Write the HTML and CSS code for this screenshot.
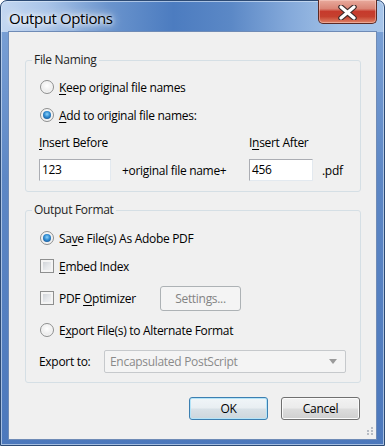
FILE: index.html
```html
<!DOCTYPE html>
<html lang="en">
<head>
    <meta charset="UTF-8">
    <title>Output Options</title>
    <link rel="stylesheet" href="styles.css">
</head>
<body>

    <div class="window">

        <!-- Title bar -->
        <div class="titlebar">
            <span class="title">Output Options</span>
            <button class="close-btn" aria-label="Close">
                <svg width="19" height="15" viewBox="0 0 19 15">
                    <path d="M3 2 L16 13 M16 2 L3 13" stroke="#3a2a2a" stroke-width="5.5" stroke-linecap="round"/>
                    <path d="M3 2 L16 13 M16 2 L3 13" stroke="#ffffff" stroke-width="3.2" stroke-linecap="round"/>
                </svg>
            </button>
        </div>

        <!-- Client area -->
        <div class="client">

            <fieldset class="group group-naming">
                <legend>File Naming</legend>
                <div class="row">
                    <span class="radio"></span>
                    <span><u>K</u>eep original file names</span>
                </div>
                <div class="row">
                    <span class="radio checked"></span>
                    <span><u>A</u>dd to original file names:</span>
                </div>
                <div class="insert-grid">
                    <span><u>I</u>nsert Before</span>
                    <span></span>
                    <span>I<u>n</u>sert After</span>
                    <span></span>
                    <div class="textbox tb-before">123</div>
                    <span>+original file name+</span>
                    <div class="textbox tb-after">456</div>
                    <span>.pdf</span>
                </div>
            </fieldset>

            <fieldset class="group group-format">
                <legend>Output Format</legend>
                <div class="row">
                    <span class="radio checked"></span>
                    <span>Sa<u>v</u>e File(s) As Adobe PDF</span>
                </div>
                <div class="row">
                    <span class="checkbox"></span>
                    <span><u>E</u>mbed Index</span>
                </div>
                <div class="row row-optimizer">
                    <div class="opt-label">
                        <span class="checkbox"></span>
                        <span>PDF <u>O</u>ptimizer</span>
                    </div>
                    <button class="button button-disabled" disabled>Settings...</button>
                </div>
                <div class="row">
                    <span class="radio"></span>
                    <span>E<u>x</u>port File(s) to Alternate Format</span>
                </div>
                <div class="row row-export">
                    <span class="export-label">Export to:</span>
                    <div class="dropdown">
                        <span>Encapsulated PostScript</span>
                        <span class="arrow"></span>
                    </div>
                </div>
            </fieldset>

            <div class="footer">
                <button class="button button-default">OK</button>
                <button class="button">Cancel</button>
            </div>

            <!-- Resize grip -->
            <svg class="grip" width="8" height="9" viewBox="0 0 8 9">
                <rect x="5" y="0" width="2" height="2" fill="#b7bcc4"/>
                <rect x="1" y="3" width="2" height="2" fill="#b7bcc4"/>
                <rect x="5" y="3" width="2" height="2" fill="#b7bcc4"/>
                <rect x="1" y="6" width="2" height="2" fill="#b7bcc4"/>
                <rect x="5" y="6" width="2" height="2" fill="#b7bcc4"/>
            </svg>
        </div>

    </div>

</body>
</html>
```

FILE: styles.css
```css
/* General Styling */
* {
    margin: 0;
    padding: 0;
    box-sizing: border-box;
}

body {
    background-color: #ffffff;
    font-family: "Segoe UI", "Open Sans", sans-serif;
    font-size: 12px;
    letter-spacing: -0.3px;
    color: #000000;
}

u {
    text-decoration-thickness: 1px;
    text-underline-offset: 2px;
}

/* Window frame */
.window {
    width: 385px;
    height: 446px;
    border: 1px solid #2c4a74;
    border-radius: 7px 7px 0 0;
    padding: 0 7px 5px 7px;
    display: flex;
    flex-direction: column;
    background:
        linear-gradient(90deg, #c3d7f1 0%, #a9c4e8 12%, #6a94cd 28%, #4c7cc0 45%, #5b88c6 60%, #84a9da 75%, #a1c1e7 88%, #a7c5ea 100%) top / 100% 31px no-repeat,
        linear-gradient(180deg, #7ea4d8 0%, #5d87c5 40%, #4c78bc 100%);
    box-shadow: inset 0 0 0 1px rgba(225, 236, 250, 0.6);
}

/* Title bar */
.titlebar {
    height: 30px;
    display: flex;
    align-items: flex-start;
}

.title {
    margin-top: 7px;
    padding-left: 1px;
    font-size: 15px;
    letter-spacing: -0.4px;
    line-height: 20px;
    color: #000000;
    text-shadow: 0 0 8px #ffffff, 0 0 12px rgba(255, 255, 255, 0.9), 0 0 4px #ffffff;
}

.close-btn {
    margin-left: auto;
    margin-top: -1px;
    width: 59px;
    height: 24px;
    border: 1px solid #5c2a25;
    border-top: none;
    border-radius: 0 0 5px 5px;
    background: linear-gradient(180deg, #e8aa9d 0%, #da8576 38%, #c63a2c 50%, #c5402e 72%, #df8468 100%);
    box-shadow: inset 0 0 0 1px rgba(255, 220, 210, 0.45);
    display: flex;
    align-items: center;
    justify-content: center;
    padding-top: 1px;
}

/* Client area */
.client {
    flex: 1;
    position: relative;
    background-color: #f0f0f0;
    border: 1px solid #6f8bb6;
    display: flex;
    flex-direction: column;
}

/* Group boxes */
.group {
    margin: 0 15px 0 16px;
    border: 1px solid #d5dfe5;
    border-radius: 3px;
    padding: 5px 14px 10px 13px;
    min-width: 0;
}

.group legend {
    margin-left: -7px;
    padding: 0 2px;
    line-height: 16px;
    color: #1e1e1e;
}

.group-naming {
    margin-top: 20px;
}

.group-format {
    margin-top: 10px;
    padding-top: 6px;
    padding-bottom: 9px;
}

.row {
    height: 28px;
    display: flex;
    align-items: center;
    gap: 5px;
}

.row-optimizer {
    height: 36px;
}

.row-export {
    height: 23px;
    margin-top: 6px;
    gap: 0;
}

/* Radio buttons and check boxes */
.radio {
    width: 14px;
    height: 14px;
    margin-left: 1px;
    border-radius: 50%;
    border: 1px solid #8e8f8f;
    background: radial-gradient(circle at 50% 40%, #ffffff 0%, #ececec 60%, #d6d6d6 100%);
    box-shadow: inset 0 0 0 1px #f6f6f6;
    position: relative;
    flex-shrink: 0;
}

.radio.checked::after {
    content: "";
    position: absolute;
    left: 2px;
    top: 2px;
    width: 8px;
    height: 8px;
    border-radius: 50%;
    background: radial-gradient(circle at 50% 40%, #8fd3fa 0%, #2f8ad0 45%, #0d3f7d 100%);
}

.checkbox {
    width: 14px;
    height: 14px;
    margin-left: 1px;
    border: 1px solid #8e8f8f;
    background: linear-gradient(135deg, #c7cbd1 0%, #e6e8eb 55%, #f7f7f7 100%);
    box-shadow: inset 0 0 0 2px #f4f4f4;
    flex-shrink: 0;
}

/* Insert before / after */
.insert-grid {
    display: grid;
    grid-template-columns: 83px 127px 73px auto;
    grid-template-rows: 26px 22px;
    row-gap: 4px;
    align-items: center;
}

.textbox {
    height: 22px;
    background: #ffffff;
    border: 1px solid;
    border-color: #abadb3 #e3e9ef #e3e9ef #abadb3;
    padding-left: 2px;
    line-height: 20px;
}

.tb-before {
    width: 72px;
}

.tb-after {
    width: 64px;
}

/* Output format */
.opt-label {
    width: 116px;
    display: flex;
    align-items: center;
    gap: 5px;
}

.export-label {
    width: 65px;
}

.dropdown {
    flex: 1;
    height: 23px;
    border: 1px solid #c6c9cc;
    border-radius: 2px;
    background: #f4f4f4;
    color: #8a8a8a;
    display: flex;
    align-items: center;
    padding: 0 5px 0 5px;
}

.dropdown .arrow {
    margin-left: auto;
    margin-right: 3px;
    width: 0;
    height: 0;
    border-left: 4px solid transparent;
    border-right: 4px solid transparent;
    border-top: 5px solid #9a9a9a;
}

/* Buttons */
.button {
    font-family: inherit;
    font-size: 12px;
    letter-spacing: inherit;
    width: 79px;
    height: 23px;
    color: #000000;
    border: 1px solid #707070;
    border-radius: 3px;
    background: linear-gradient(180deg, #f2f2f2 0%, #ebebeb 48%, #dddddd 52%, #cfcfcf 100%);
    box-shadow: inset 0 0 0 1px #fbfbfb;
}

.button-disabled {
    width: 81px;
    height: 25px;
    border-color: #adb2b5;
    background: #f4f4f4;
    color: #838383;
    box-shadow: none;
}

.button-default {
    border-color: #3c7fb1;
    box-shadow: inset 0 0 0 1px #b4e4f8;
    background: linear-gradient(180deg, #f0f5f8 0%, #e8eef2 48%, #d8e1e7 52%, #cdd6dc 100%);
}

.footer {
    margin-top: 14px;
    padding-right: 16px;
    display: flex;
    justify-content: flex-end;
    gap: 13px;
}

.grip {
    position: absolute;
    right: 2px;
    bottom: 3px;
}
```
